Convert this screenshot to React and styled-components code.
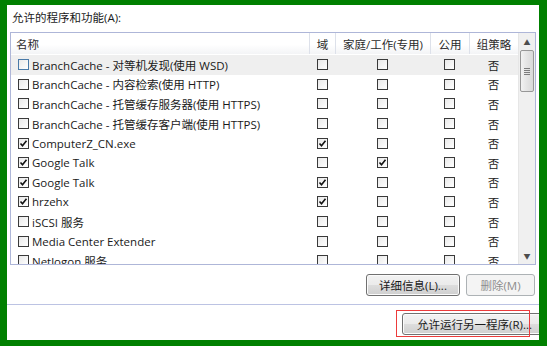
import React from "react";
import styled, { createGlobalStyle } from "styled-components";

const GlobalStyle = createGlobalStyle`
  html, body {
    margin: 0;
    padding: 0;
    background: #008000;
  }
  body {
    font-family: "Open Sans", "Noto Sans CJK SC", "Microsoft YaHei", sans-serif;
    font-size: 11.5px;
    color: #1a1a1a;
  }
`;

const rows = [
  { name: "BranchCache - 对等机发现(使用 WSD)", on: false, domain: false, home: false, pub: false, hover: true },
  { name: "BranchCache - 内容检索(使用 HTTP)", on: false, domain: false, home: false, pub: false },
  { name: "BranchCache - 托管缓存服务器(使用 HTTPS)", on: false, domain: false, home: false, pub: false },
  { name: "BranchCache - 托管缓存客户端(使用 HTTPS)", on: false, domain: false, home: false, pub: false },
  { name: "ComputerZ_CN.exe", on: true, domain: true, home: false, pub: false },
  { name: "Google Talk", on: true, domain: false, home: true, pub: false },
  { name: "Google Talk", on: true, domain: true, home: false, pub: false },
  { name: "hrzehx", on: true, domain: true, home: false, pub: false },
  { name: "iSCSI 服务", on: false, domain: false, home: false, pub: false },
  { name: "Media Center Extender", on: false, domain: false, home: false, pub: false },
  { name: "Netlogon 服务", on: false, domain: false, home: false, pub: false },
];

const COLS = "298px 26px 95px 39px 49px";

const Frame = styled.div`
  width: 547px;
  height: 346px;
  box-sizing: border-box;
  border-style: solid;
  border-color: #008000;
  border-width: 5px 8px 6px 7px;
  background: #fff;
  display: flex;
  flex-direction: column;
  overflow: hidden;
`;

const Upper = styled.div`
  padding: 0 3px 0 3px;
  display: flex;
  flex-direction: column;
`;

const Caption = styled.div`
  margin: 4px 0 0 2px;
  height: 23px;
  line-height: 16px;
  padding-top: 1px;
  box-sizing: border-box;
`;

const ListBox = styled.div`
  display: flex;
  border: 1px solid #aeb6d8;
  height: 233px;
  box-sizing: border-box;
  width: 526px;
`;

const Table = styled.div`
  width: 507px;
  overflow: hidden;
  display: flex;
  flex-direction: column;
`;

const Header = styled.div`
  display: grid;
  grid-template-columns: ${COLS};
  height: 21px;
  flex: none;
  background: linear-gradient(#ffffff, #ffffff 55%, #f3f4f6);
`;

const HeadCell = styled.div`
  display: flex;
  align-items: center;
  justify-content: ${(p) => (p.$left ? "flex-start" : "center")};
  padding-left: ${(p) => (p.$left ? "5px" : "0")};
  border-left: ${(p) => (p.$left ? "none" : "1px solid #dde1ea")};
  color: #2b2b2b;
  white-space: nowrap;
`;

const Body = styled.div`
  flex: 1;
  overflow: hidden;
  padding-top: 1px;
`;

const Row = styled.div`
  display: grid;
  grid-template-columns: ${COLS};
  height: 19.6px;
  align-items: center;
  background: ${(p) => (p.$hover ? "#efefef" : "transparent")};
`;

const NameCell = styled.div`
  display: flex;
  align-items: center;
  gap: 3px;
  padding-left: 7px;
  white-space: nowrap;
  overflow: hidden;
`;

const Cell = styled.div`
  display: flex;
  justify-content: center;
  align-items: center;
`;

const Box = styled.span`
  flex: none;
  width: 11px;
  height: 11px;
  box-sizing: border-box;
  border: 1px solid ${(p) => (p.$focus ? "#4a7aa8" : "#3a3a3a")};
  background: linear-gradient(135deg, #e9e9e9, #ffffff);
  display: inline-flex;
  align-items: center;
  justify-content: center;
`;

const Check = ({ on, focus }) => (
  <Box $focus={focus}>
    {on && (
      <svg width="9" height="9" viewBox="0 0 9 9">
        <path d="M1.5 4.5 L3.5 6.8 L7.5 1.8" fill="none" stroke="#111" strokeWidth="1.6" />
      </svg>
    )}
  </Box>
);

const No = styled.span`
  color: #222;
`;

const Scroll = styled.div`
  width: 17px;
  flex: none;
  background: #f0f0f0;
  border-left: 1px solid #e6e6e6;
  box-sizing: border-box;
  display: flex;
  flex-direction: column;
`;

const Arrow = styled.div`
  height: 17px;
  flex: none;
  display: flex;
  align-items: center;
  justify-content: center;
  color: #4d4d4d;
  font-size: 7px;
`;

const Thumb = styled.div`
  height: 40px;
  margin: 0 1px;
  flex: none;
  border: 1px solid #979797;
  border-radius: 2px;
  background: linear-gradient(90deg, #f2f2f2, #e4e4e4 50%, #d9d9d9);
  display: flex;
  flex-direction: column;
  align-items: center;
  justify-content: center;
  gap: 1px;
`;

const Grip = styled.span`
  width: 6px;
  height: 1px;
  background: #7c7c7c;
`;

const Track = styled.div`
  flex: 1;
`;

const ButtonRow = styled.div`
  display: flex;
  justify-content: flex-end;
  gap: 6px;
  margin-top: 9px;
  padding-right: 1px;
`;

const Button = styled.button`
  font: inherit;
  font-size: 11.5px;
  height: 22px;
  width: ${(p) => p.$w}px;
  padding: 0;
  border: 1px solid ${(p) => (p.disabled ? "#adb2b5" : "#707070")};
  border-radius: 3px;
  background: ${(p) =>
    p.disabled
      ? "#f4f4f4"
      : "linear-gradient(#f2f2f2, #ebebeb 49%, #dddddd 51%, #cfcfcf)"};
  color: ${(p) => (p.disabled ? "#8d8d8d" : "#1a1a1a")};
  box-shadow: ${(p) => (p.disabled ? "none" : "inset 0 0 0 1px #fbfbfb")};
  flex: none;
`;

const Divider = styled.div`
  height: 1px;
  background: #bcc3e3;
  margin-top: 8px;
`;

const Footer = styled.div`
  position: relative;
  display: flex;
  padding: 8px 0 0 395px;
`;

const Mark = styled.div`
  position: absolute;
  left: 389px;
  top: 5px;
  width: 134px;
  height: 27px;
  box-sizing: border-box;
  border: 1px solid #ec3b3b;
  pointer-events: none;
`;

export default function App() {
  return (
    <>
      <GlobalStyle />
      <Frame>
        <Upper>
          <Caption>允许的程序和功能(A):</Caption>
          <ListBox>
            <Table>
              <Header>
                <HeadCell $left>名称</HeadCell>
                <HeadCell>域</HeadCell>
                <HeadCell>家庭/工作(专用)</HeadCell>
                <HeadCell>公用</HeadCell>
                <HeadCell>组策略</HeadCell>
              </Header>
              <Body>
                {rows.map((r, i) => (
                  <Row key={i} $hover={r.hover}>
                    <NameCell>
                      <Check on={r.on} focus={r.hover} />
                      {r.name}
                    </NameCell>
                    <Cell><Check on={r.domain} /></Cell>
                    <Cell><Check on={r.home} /></Cell>
                    <Cell><Check on={r.pub} /></Cell>
                    <Cell><No>否</No></Cell>
                  </Row>
                ))}
              </Body>
            </Table>
            <Scroll>
              <Arrow>▲</Arrow>
              <Thumb>
                <Grip />
                <Grip />
                <Grip />
                <Grip />
              </Thumb>
              <Track />
              <Arrow>▼</Arrow>
            </Scroll>
          </ListBox>
          <ButtonRow>
            <Button $w={94}>详细信息(L)...</Button>
            <Button $w={69} disabled>删除(M)</Button>
          </ButtonRow>
        </Upper>
        <Divider />
        <Footer>
          <Button $w={145}>允许运行另一程序(R)...</Button>
          <Mark />
        </Footer>
      </Frame>
    </>
  );
}
